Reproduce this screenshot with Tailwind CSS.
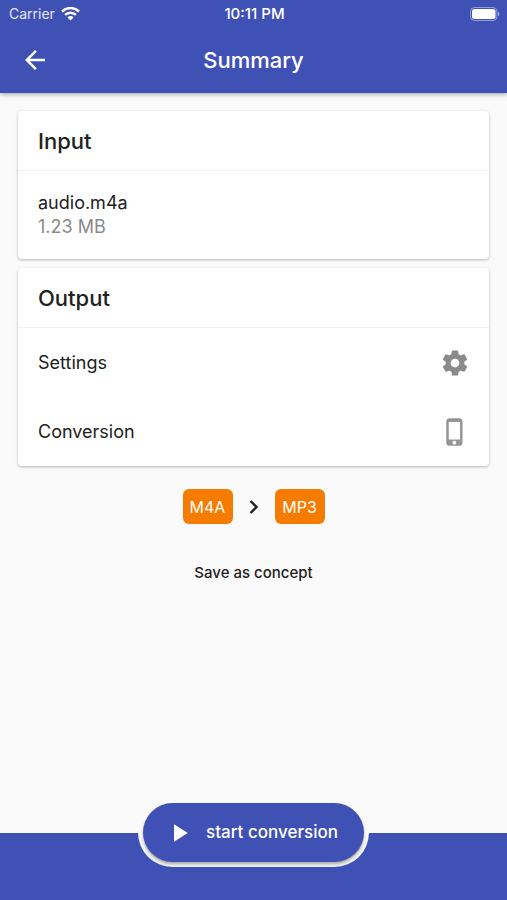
<!DOCTYPE html>
<html lang="en">
<head>
<meta charset="utf-8">
<meta name="viewport" content="width=device-width, initial-scale=1">
<title>Summary</title>
<script src="https://cdn.jsdelivr.net/npm/@tailwindcss/browser@4"></script>
</head>
<body class="flex min-h-screen flex-col bg-[#fafafa] font-['Inter',sans-serif] text-[#212121]">
  <header class="bg-[#3f51b5] text-white shadow-[0_1px_5px_rgba(0,0,0,0.4)]">
    <div class="grid h-7 grid-cols-3 items-center pr-[7px] pl-[9px] text-[15px]">
      <div class="flex items-center gap-1.5 text-sm text-white/85">
        <span>Carrier</span>
        <svg class="h-[14px] w-[19px] text-white" viewBox="0 0 19 14" fill="none" stroke="currentColor" stroke-width="2.5" aria-label="Wi-Fi">
          <path d="M1 4.500a12.200 12.200 0 0 1 17 0"/>
          <path d="M4.100 7.900a7.600 7.600 0 0 1 10.800 0"/>
          <path d="M9.500 13.500 6.400 10.400a4.300 4.300 0 0 1 6.200 0z" fill="currentColor" stroke="none"/>
        </svg>
      </div>
      <time class="text-center font-medium">10:11 PM</time>
      <svg class="h-[14px] w-[30px] justify-self-end" viewBox="0 0 30 14" aria-label="Battery full">
        <rect x="0.5" y="0.5" width="26.500" height="13" rx="4" fill="none" stroke="#fff" stroke-opacity=".45"/>
        <rect x="2" y="2" width="23.500" height="10" rx="2.5" fill="#fff"/>
        <path d="M28 4.800c2 .8 2 3.600 0 4.400z" fill="#fff" fill-opacity=".5"/>
      </svg>
    </div>
    <div class="grid h-[65px] grid-cols-[1fr_auto_1fr] items-center px-[19px] pb-0.5">
      <button type="button" aria-label="Back" class="flex size-8 items-center justify-center">
        <svg class="size-[30px]" viewBox="0 0 24 24" fill="currentColor"><path d="M20 11H7.830l5.590-5.590L12 4l-8 8 8 8 1.410-1.410L7.830 13H20v-2z"/></svg>
      </button>
      <h1 class="text-[22px] leading-7 font-medium">Summary</h1>
    </div>
  </header>

  <main class="flex grow flex-col gap-[9px] px-[18px] pt-[18px]">
    <section class="rounded bg-white shadow-[0_1px_3px_rgba(0,0,0,0.28)]">
      <h2 class="border-b border-[#f2f2f2] px-5 pt-[17px] pb-[15px] text-[22px] leading-[27px] font-medium">Input</h2>
      <div class="px-5 py-5 text-lg leading-6">
        <p>audio.m4a</p>
        <p class="text-[#8a8a8a]">1.23 MB</p>
      </div>
    </section>

    <section class="rounded bg-white shadow-[0_1px_3px_rgba(0,0,0,0.28)]">
      <h2 class="border-b border-[#f2f2f2] px-5 pt-[17px] pb-[15px] text-[22px] leading-[27px] font-medium">Output</h2>
      <button type="button" class="flex h-[69px] w-full items-center justify-between pr-[19px] pl-5 text-lg">
        <span>Settings</span>
        <svg class="size-[30px] text-[#8a8a8a]" viewBox="0 0 24 24" fill="currentColor"><path d="M19.430 12.980c.04-.32.07-.64.07-.98s-.03-.66-.07-.98l2.110-1.650c.19-.15.24-.42.12-.64l-2-3.460c-.12-.22-.39-.3-.61-.22l-2.490 1c-.52-.4-1.080-.73-1.690-.98l-.38-2.650C14.460 2.180 14.250 2 14 2h-4c-.25 0-.46.18-.49.42l-.38 2.650c-.61.25-1.170.59-1.690.98l-2.490-1c-.23-.09-.49 0-.61.22l-2 3.460c-.13.22-.07.49.12.64l2.110 1.650c-.04.32-.07.65-.07.98s.03.66.07.98l-2.110 1.650c-.19.15-.24.42-.12.64l2 3.460c.12.22.39.3.61.22l2.490-1c.52.4 1.080.73 1.690.98l.38 2.650c.03.24.24.42.49.42h4c.25 0 .46-.18.49-.42l.38-2.650c.61-.25 1.170-.59 1.690-.98l2.490 1c.23.09.49 0 .61-.22l2-3.460c.12-.22.07-.49-.12-.64l-2.110-1.650zM12 15.500c-1.930 0-3.500-1.570-3.500-3.500s1.570-3.500 3.500-3.500 3.500 1.570 3.500 3.500-1.570 3.500-3.500 3.500z"/></svg>
      </button>
      <button type="button" class="flex h-[69px] w-full items-center justify-between pr-[19px] pl-5 text-lg">
        <span>Conversion</span>
        <svg class="size-[30px] text-[#969696]" viewBox="0 0 24 24" fill="currentColor"><path d="M15.500 1h-8C6.120 1 5 2.120 5 3.500v17C5 21.880 6.120 23 7.500 23h8c1.380 0 2.500-1.120 2.500-2.500v-17C18 2.120 16.880 1 15.500 1zm-4 21c-.83 0-1.500-.67-1.500-1.500s.67-1.500 1.500-1.500 1.500.67 1.500 1.500-.67 1.500-1.500 1.500zm4.500-4H7V4h9v14z"/></svg>
      </button>
    </section>

    <div class="mt-3.5 flex items-center justify-center gap-[11px] text-base text-white">
      <span class="flex h-[35px] w-[50px] items-center justify-center rounded-md bg-[#f57c00]">M4A</span>
      <svg class="size-5 text-[#212121]" viewBox="0 0 20 20" fill="none" stroke="currentColor" stroke-width="2.400" aria-label="to"><path d="m6.500 4 6 6-6 6"/></svg>
      <span class="flex h-[35px] w-[50px] items-center justify-center rounded-md bg-[#f57c00]">MP3</span>
    </div>

    <button type="button" class="mt-5 self-center px-4 py-2 text-[15px] leading-6 font-medium">Save as concept</button>
  </main>

  <footer class="flex h-[67px] items-start justify-center bg-[#3f51b5]">
    <div class="-mt-[35px] overflow-hidden rounded-full bg-[#f5f5f5] bg-linear-to-b from-[#fafafa] from-50% to-[#f0f0f0] p-[5px]">
      <button type="button" class="flex h-[59px] items-center gap-3 rounded-full bg-[#3f51b5] pr-[26px] pl-[21px] text-[17px] font-medium text-white shadow-[0_2px_3px_rgba(0,0,0,0.3)]">
        <svg class="size-[30px]" viewBox="0 0 24 24" fill="currentColor" aria-hidden="true"><path d="M8 5v14l11-7z"/></svg>
        start conversion
      </button>
    </div>
  </footer>
</body>
</html>
